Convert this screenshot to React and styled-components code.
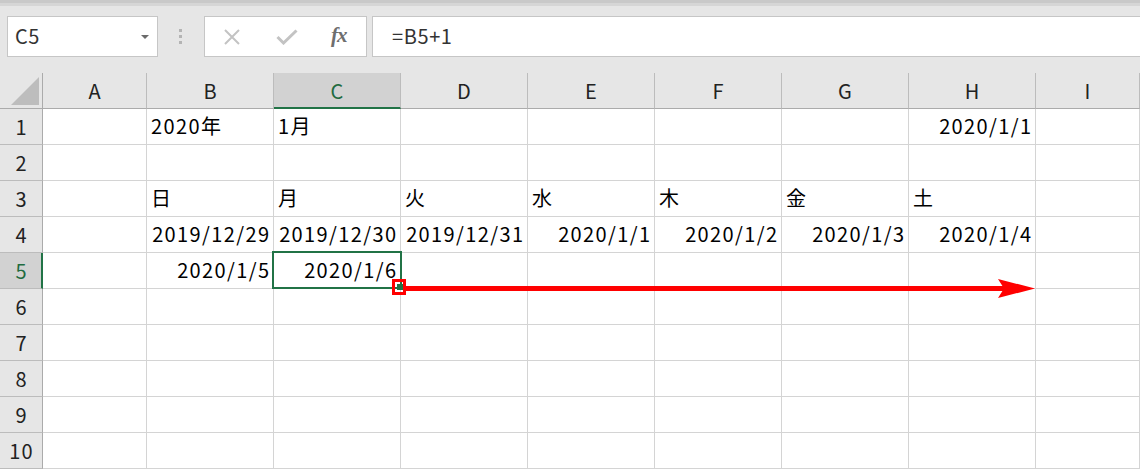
import React from "react";
import styled, { createGlobalStyle, css } from "styled-components";

const GlobalStyle = createGlobalStyle`
  html, body { margin: 0; padding: 0; background: #ffffff; }
  body { font-family: "Noto Sans CJK JP", "Noto Sans", sans-serif; }
  * { box-sizing: border-box; }
`;

const FONT = `"Noto Sans CJK JP", "Noto Sans", sans-serif`;
const GREEN = "#217346";
const GRID = "#d4d4d4";
const HEAD_LINE = "#bcbcbc";

const Window = styled.div`
  width: 1140px;
  height: 469px;
  overflow: hidden;
  background: #e6e6e6;
  display: flex;
  flex-direction: column;
`;

const TopStrip = styled.div`
  height: 6px;
  flex: none;
  background: linear-gradient(#c9c9c9 0 3px, #d6d6d6 3px 6px);
`;

const FormulaRow = styled.div`
  display: flex;
  align-items: stretch;
  height: 41px;
  margin: 10px 0 16px 7px;
  flex: none;
`;

const NameBox = styled.div`
  width: 151px;
  background: #fff;
  border: 1px solid #c6c6c6;
  display: flex;
  align-items: center;
  justify-content: space-between;
  padding: 0 8px 2px 7px;
  font-family: ${FONT};
  font-size: 20px;
  letter-spacing: 0.6px;
  color: #333;
`;

const DropArrow = styled.span`
  width: 0;
  height: 0;
  border-left: 4px solid transparent;
  border-right: 4px solid transparent;
  border-top: 4px solid #6b6b6b;
  margin-top: 2px;
`;

const Grip = styled.div`
  width: 46px;
  display: flex;
  flex-direction: column;
  align-items: center;
  justify-content: center;
  gap: 3px;
  padding-right: 2px;
`;

const GripDot = styled.span`
  width: 3px;
  height: 3px;
  background: #b4b4b4;
`;

const FuncBox = styled.div`
  width: 163px;
  background: #fff;
  border: 1px solid #c6c6c6;
  display: flex;
  align-items: center;
  padding-left: 18px;
`;

const IconSlot = styled.span`
  width: ${(p) => p.$w}px;
  display: flex;
  align-items: center;
  justify-content: flex-start;
`;

const Fx = styled.span`
  font-family: "Liberation Serif", "DejaVu Serif", serif;
  font-style: italic;
  font-weight: bold;
  font-size: 21px;
  color: #6e6e6e;
  letter-spacing: -1px;
  margin-top: -2px;
`;

const FormulaInput = styled.div`
  flex: 1;
  margin-left: 5px;
  margin-right: -3px;
  background: #fff;
  border: 1px solid #c6c6c6;
  display: flex;
  align-items: center;
  padding: 0 0 2px 19px;
  font-family: ${FONT};
  font-size: 20px;
  letter-spacing: 0.6px;
  color: #333;
`;

const Sheet = styled.div`
  position: relative;
  display: grid;
  grid-template-columns: 43px 104px repeat(7, 127px) 104px;
  grid-template-rows: repeat(11, 36px);
  background: #fff;
  flex: none;
`;

const Cell = styled.div`
  border-right: 1px solid ${GRID};
  border-bottom: 1px solid ${GRID};
  display: flex;
  align-items: center;
  justify-content: ${(p) => (p.$right ? "flex-end" : "flex-start")};
  padding: 0 2.4px 2px 4px;
  font-family: ${FONT};
  font-size: 20px;
  letter-spacing: 1.4px;
  color: #000;
  white-space: nowrap;
  overflow: visible;
`;

const Header = styled.div`
  background: ${(p) => (p.$active ? "#d2d2d2" : "#e6e6e6")};
  display: flex;
  align-items: center;
  justify-content: center;
  font-family: ${FONT};
  font-size: 20px;
  letter-spacing: 1.2px;
  text-indent: 1.2px;
  color: ${(p) => (p.$active ? "#1f6b40" : "#222")};
  padding-bottom: 1px;
`;

const ColHeader = styled(Header)`
  border-right: 1px solid ${HEAD_LINE};
  border-bottom: ${(p) => (p.$active ? `2px solid ${GREEN}` : "1px solid #ababab")};
  ${(p) => p.$active && css`padding-bottom: 0;`}
`;

const RowHeader = styled(Header)`
  border-bottom: 1px solid ${HEAD_LINE};
  border-right: ${(p) => (p.$active ? `2px solid ${GREEN}` : "1px solid #ababab")};
  ${(p) => p.$active && css`padding-left: 1px;`}
`;

const Corner = styled.div`
  background: #e6e6e6;
  border-right: 1px solid #ababab;
  border-bottom: 1px solid #ababab;
  display: flex;
  align-items: flex-end;
  justify-content: flex-end;
  padding: 0 3px 3px 0;
`;

const Selection = styled.div`
  position: absolute;
  left: 272px;
  top: 178px;
  width: 130px;
  height: 38px;
  border: 2px solid ${GREEN};
  pointer-events: none;
`;

const Overlay = styled.svg`
  position: absolute;
  left: 0;
  top: 0;
  pointer-events: none;
`;

const COLS = ["A", "B", "C", "D", "E", "F", "G", "H", "I"];

const L = (t) => ({ t });
const R = (t) => ({ t, r: true });

const DATA = {
  1: { B: L("2020年"), C: L("1月"), H: R("2020/1/1") },
  3: { B: L("日"), C: L("月"), D: L("火"), E: L("水"), F: L("木"), G: L("金"), H: L("土") },
  4: {
    B: R("2019/12/29"),
    C: R("2019/12/30"),
    D: R("2019/12/31"),
    E: R("2020/1/1"),
    F: R("2020/1/2"),
    G: R("2020/1/3"),
    H: R("2020/1/4"),
  },
  5: { B: R("2020/1/5"), C: R("2020/1/6") },
};

function CancelIcon() {
  return (
    <svg width="18" height="18" viewBox="0 0 18 18">
      <path d="M2 2 L16 16 M16 2 L2 16" stroke="#c3c3c3" strokeWidth="2" fill="none" />
    </svg>
  );
}

function CheckIcon() {
  return (
    <svg width="22" height="16" viewBox="0 0 22 16">
      <path d="M1.5 8 L7.5 14 L20.5 1.5" stroke="#c3c3c3" strokeWidth="3" fill="none" />
    </svg>
  );
}

function CornerTriangle() {
  return (
    <svg width="28" height="28" viewBox="0 0 28 28">
      <polygon points="28,0 28,28 0,28" fill="#bdbdbd" />
    </svg>
  );
}

export default function App() {
  return (
    <>
      <GlobalStyle />
      <Window>
        <TopStrip />
        <FormulaRow>
          <NameBox>
            <span>C5</span>
            <DropArrow />
          </NameBox>
          <Grip>
            <GripDot />
            <GripDot />
            <GripDot />
          </Grip>
          <FuncBox>
            <IconSlot $w={53}>
              <CancelIcon />
            </IconSlot>
            <IconSlot $w={55}>
              <CheckIcon />
            </IconSlot>
            <IconSlot $w={30}>
              <Fx>fx</Fx>
            </IconSlot>
          </FuncBox>
          <FormulaInput>=B5+1</FormulaInput>
        </FormulaRow>
        <Sheet>
          <Corner>
            <CornerTriangle />
          </Corner>
          {COLS.map((c) => (
            <ColHeader key={c} $active={c === "C"}>
              {c}
            </ColHeader>
          ))}
          {Array.from({ length: 10 }, (_, i) => i + 1).map((r) => (
            <React.Fragment key={r}>
              <RowHeader $active={r === 5}>{r}</RowHeader>
              {COLS.map((c) => {
                const d = DATA[r] && DATA[r][c];
                return (
                  <Cell key={c} $right={d && d.r}>
                    {d ? d.t : ""}
                  </Cell>
                );
              })}
            </React.Fragment>
          ))}
          <Selection />
          <Overlay width="1140" height="396" viewBox="0 0 1140 396">
            <rect x="393.5" y="207.5" width="11" height="13" fill="none" stroke="#ff0000" strokeWidth="3" />
            <rect x="397" y="211" width="6" height="6" fill={GREEN} />
            <line x1="406" y1="215.5" x2="1004" y2="215.5" stroke="#ff0000" strokeWidth="5" />
            <polygon points="998,206 1035,215.5 998,225 1004,215.5" fill="#ff0000" />
          </Overlay>
        </Sheet>
      </Window>
    </>
  );
}
